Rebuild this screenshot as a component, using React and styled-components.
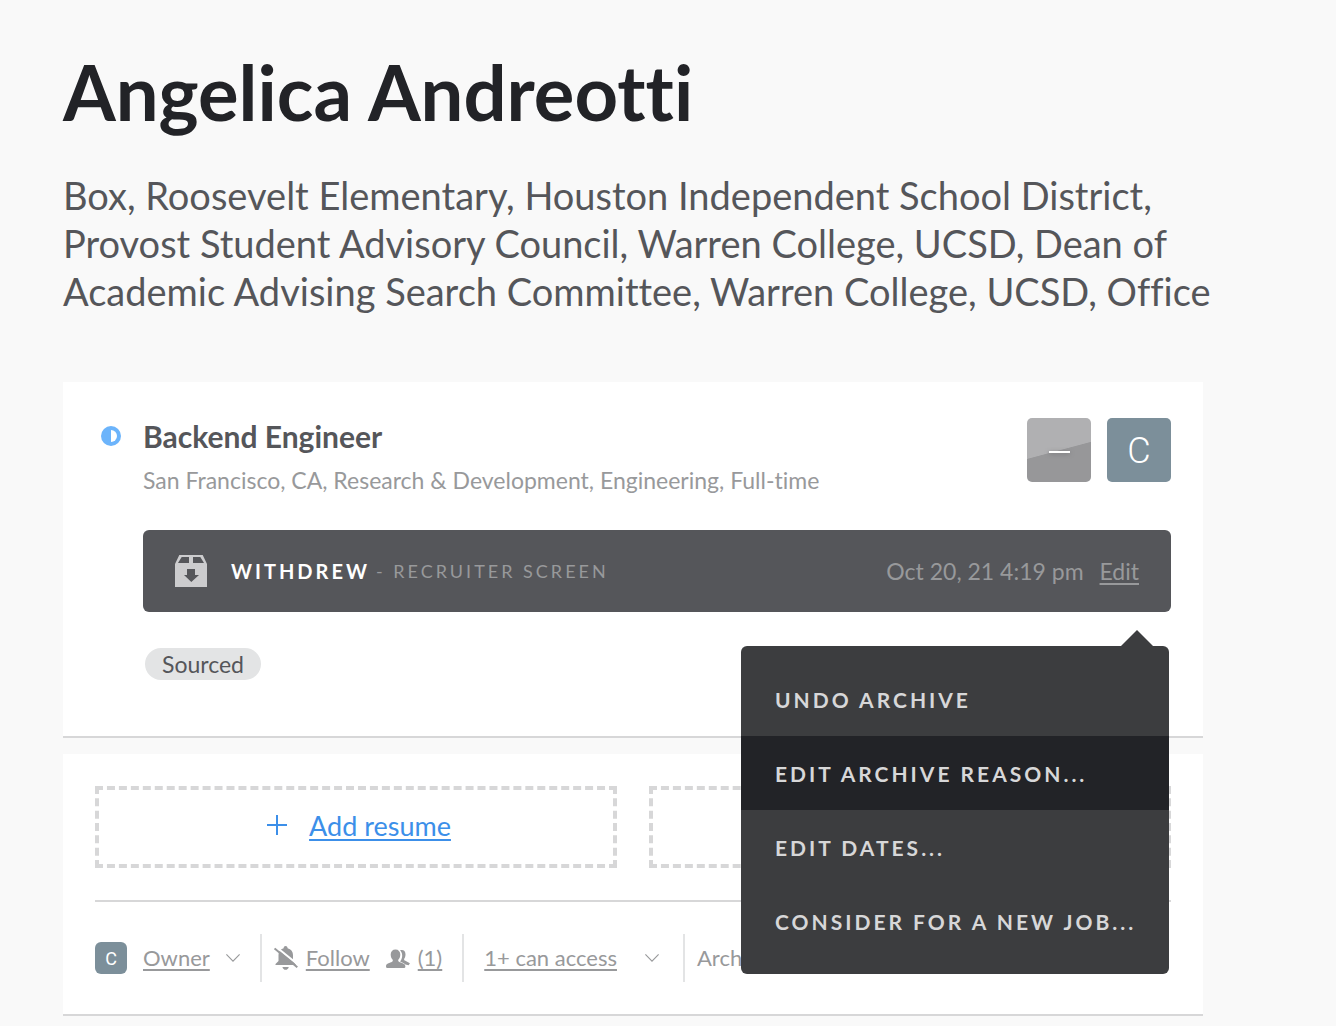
import React from "react";
import styled, { createGlobalStyle } from "styled-components";

const GlobalStyle = createGlobalStyle`
  *, *::before, *::after { box-sizing: border-box; }
  body {
    margin: 0;
    background: #f9f9f9;
    color: #55565a;
    font-family: Lato, "Open Sans", sans-serif;
    font-variant-ligatures: none;
  }
  h1, h2, p, ul { margin: 0; padding: 0; }
  button { font: inherit; color: inherit; border: 0; background: none; padding: 0; cursor: pointer; }
  a { color: inherit; text-decoration-thickness: 2px; text-underline-offset: 3px; }
  svg { display: block; flex: none; }
`;

const Page = styled.main`
  padding: 46px 133px 10px 63px;
`;

const Name = styled.h1`
  font-size: 76px;
  line-height: 92px;
  font-weight: 700;
  color: #222327;
`;

const Headline = styled.p`
  margin: 33px 0 67px;
  font-size: 38px;
  line-height: 48px;
`;

const Line = styled.span`
  display: block;
  white-space: nowrap;
`;

const Card = styled.section`
  background: #fff;
  border-bottom: 2px solid #d7d7d8;
  padding: 32px;
  & + & { margin-top: 16px; }
`;

const JobHeader = styled.header`
  display: flex;
  align-items: flex-start;
  gap: 16px;
  padding-top: 4px;
`;

const StageMark = styled.div`
  width: 32px;
  display: flex;
  justify-content: center;
  padding-top: 8px;
`;

const JobText = styled.div`
  flex: 1;
`;

const JobTitle = styled.h2`
  font-size: 30px;
  line-height: 36px;
  font-weight: 700;
`;

const JobMeta = styled.p`
  margin-top: 8px;
  font-size: 23px;
  line-height: 36px;
  color: #98999b;
`;

const Avatar = styled.div`
  width: ${(p) => p.$size}px;
  height: ${(p) => p.$size}px;
  border-radius: ${(p) => (p.$size > 40 ? 5 : 6)}px;
  display: grid;
  place-items: center;
  flex: none;
  color: #fff;
  padding-top: 2px;
  font-family: Roboto, sans-serif;
  font-size: ${(p) => (p.$size > 40 ? 36 : 18)}px;
  font-weight: ${(p) => (p.$size > 40 ? 300 : 400)};
  background: ${(p) =>
    p.$empty ? "linear-gradient(165deg, #b0b0b2 50%, #979799 51%)" : "#7c8f9a"};
`;

const Dash = styled.span`
  width: 21px;
  height: 2px;
  margin-top: 2px;
  background: #fff;
  box-shadow: 0 1px 4px #77777a;
`;

const Banner = styled.div`
  position: relative;
  display: flex;
  align-items: center;
  height: 82px;
  margin: 32px 0 36px 48px;
  padding: 0 32px;
  border-radius: 6px;
  background: #55565a;
  color: #98999b;
  font-size: 23px;
`;

const Reason = styled.strong`
  margin-left: 24px;
  font-size: 20px;
  font-weight: 700;
  letter-spacing: 3px;
  color: #fff;
`;

const Stage = styled.span`
  flex: 1;
  margin-left: 6px;
  font-size: 18px;
  letter-spacing: 3px;
`;

const EditButton = styled.button`
  margin-left: 16px;
  text-decoration: underline 2px;
  text-underline-offset: 3px;
`;

const Menu = styled.ul`
  position: absolute;
  top: calc(100% + 34px);
  right: 2px;
  z-index: 2;
  width: 428px;
  padding: 16px 0;
  border-radius: 6px;
  list-style: none;
  background: #3c3d3f;

  &::before {
    content: "";
    position: absolute;
    right: 16px;
    bottom: 100%;
    border: 16px solid transparent;
    border-top: 0;
    border-bottom-color: #3c3d3f;
  }
`;

const MenuItem = styled.button`
  display: block;
  width: 100%;
  height: 74px;
  padding: 0 34px;
  text-align: left;
  white-space: nowrap;
  font-size: 21px;
  font-weight: 700;
  letter-spacing: 3px;
  color: #d7d7d8;
  background: ${(p) => (p.$active ? "#222327" : "transparent")};
`;

const Tag = styled.span`
  display: block;
  width: max-content;
  margin: 0 0 24px 50px;
  padding: 0 17px;
  border-radius: 16px;
  background: #e3e4e5;
  font-size: 23px;
  line-height: 32px;
`;

const Uploads = styled.div`
  display: grid;
  grid-template-columns: 1fr 1fr;
  gap: 32px;
`;

const UploadBox = styled.div`
  display: flex;
  align-items: center;
  justify-content: center;
  gap: 22px;
  height: 82px;
  padding: 0 0 4px 6px;
  border: 4px dashed #d7d7d8;
  color: #3c8fe9;
  font-size: 27px;
`;

const Footer = styled.footer`
  display: flex;
  align-items: center;
  margin-top: 32px;
  padding-top: 32px;
  border-top: 2px solid #d7d7d8;
  color: #98999b;
  font-size: 22px;
  line-height: 28px;
`;

const FooterItem = styled.div`
  display: flex;
  align-items: center;
  gap: ${(p) => p.$gap}px;
  height: 48px;
  padding: 0 ${(p) => p.$right}px 0 ${(p) => p.$left}px;
  white-space: nowrap;
  & + & { border-left: 2px solid #e3e4e5; }
`;

const Followers = styled.span`
  display: flex;
  align-items: center;
  gap: 8px;
  margin-left: 8px;
`;

const StageIcon = () => (
  <svg width="20" height="20" viewBox="0 0 20 20" aria-hidden="true">
    <circle cx="10" cy="10" r="10" fill="#6cb4fb" />
    <path d="M10 4a6 6 0 0 1 0 12z" fill="#fff" />
  </svg>
);

const ArchiveIcon = () => (
  <svg width="32" height="32" viewBox="0 0 32 32" aria-hidden="true">
    <path
      fill="#ccccce"
      fillRule="evenodd"
      d="M4.3 0h23.4L32 9v23H0V9zM6.7 2 3 8h11V2zM18 2v6h11l-3.7-6zM12 14v6H9l7.3 7 7.7-7h-4v-6z"
    />
  </svg>
);

const PlusIcon = () => (
  <svg width="20" height="20" viewBox="0 0 20 20" aria-hidden="true">
    <path d="M10 0v20M0 10h20" stroke="currentColor" strokeWidth="2" />
  </svg>
);

const ChevronIcon = () => (
  <svg width="14" height="8" viewBox="0 0 14 8" aria-hidden="true">
    <path d="M.4.4 7 7.2 13.6.4" fill="none" stroke="currentColor" strokeWidth="1.1" />
  </svg>
);

const BellOffIcon = () => (
  <svg width="24" height="24" viewBox="0 0 24 24" aria-hidden="true">
    <path
      fill="currentColor"
      d="M9.6 2.2C9.7.9 10.5 0 11.6 0s1.9.9 2 2.2C17.2 3 19 5.6 19 9v5.5l3 4.5H1.5v-1L4.5 15V9c0-3.400 1.700-6 5.100-6.800zM8.400 21h6.400c-.5 1.900-1.700 2.800-3.200 2.800S8.900 22.900 8.400 21z"
    />
    <path d="M1 0 24.5 19" stroke="#fff" strokeWidth="2" />
    <path d="M.6 2.4 23.3 21.2" stroke="currentColor" strokeWidth="2" />
  </svg>
);

const PeopleIcon = () => (
  <svg width="24" height="19" viewBox="0 0 24 19" aria-hidden="true">
    <path
      fill="currentColor"
      d="M14 1.300c3-1 5.500.3 5.500 4 0 2.300-.6 3.500-1.300 4.400-.3 1 0 1.500 1.200 2.100l4.500 2.400-1.200 2-3.500-.6c-1.300-1.200-2.600-1.500-4-2.100-1.300-.6-1-1.400-.1-2.600 1.700-2.900 1.500-7.100-1.100-9.600z"
    />
    <path
      fill="currentColor"
      stroke="#fff"
      strokeWidth="1"
      paintOrder="stroke"
      d="M9.500.4c3 0 4.800 2 4.800 5.100 0 2.400-.9 4.200-2 5.300-.4 1.200.2 1.800 1.600 2.400 2.700 1.100 5.400 1.200 5.500 4.300q0 1.500-1.400 1.500H1.400Q0 19 0 17.500c0-3.100 2.700-3.200 5.200-4.300 1.400-.6 1.900-1.200 1.500-2.400-1.100-1.100-2-2.900-2-5.300C4.700 2.400 6.500.4 9.500.4z"
    />
  </svg>
);

const menuItems = [
  "UNDO ARCHIVE",
  "EDIT ARCHIVE REASON...",
  "EDIT DATES...",
  "CONSIDER FOR A NEW JOB...",
];

export default function App() {
  return (
    <Page>
      <GlobalStyle />
      <Name>Angelica Andreotti</Name>
      <Headline>
        <Line>Box, Roosevelt Elementary, Houston Independent School District, </Line>
        <Line>Provost Student Advisory Council, Warren College, UCSD, Dean of </Line>
        <Line>Academic Advising Search Committee, Warren College, UCSD, Office</Line>
      </Headline>

      <Card>
        <JobHeader>
          <StageMark><StageIcon /></StageMark>
          <JobText>
            <JobTitle>Backend Engineer</JobTitle>
            <JobMeta>San Francisco, CA, Research &amp; Development, Engineering, Full-time</JobMeta>
          </JobText>
          <Avatar $size={64} $empty><Dash /></Avatar>
          <Avatar $size={64}>C</Avatar>
        </JobHeader>
        <Banner>
          <ArchiveIcon />
          <Reason>WITHDREW</Reason>
          <Stage>- RECRUITER SCREEN</Stage>
          <time dateTime="2021-10-20T16:19">Oct 20, 21 4:19 pm</time>
          <EditButton type="button" aria-haspopup="menu" aria-expanded="true">Edit</EditButton>
          <Menu>
            {menuItems.map((label, i) => (
              <li key={label}>
                <MenuItem type="button" $active={i === 1}>{label}</MenuItem>
              </li>
            ))}
          </Menu>
        </Banner>
        <Tag>Sourced</Tag>
      </Card>

      <Card>
        <Uploads>
          <UploadBox>
            <PlusIcon />
            <a href="#resume">Add resume</a>
          </UploadBox>
          <UploadBox />
        </Uploads>
        <Footer>
          <FooterItem $left={0} $right={20} $gap={16}>
            <Avatar $size={32}>C</Avatar>
            <a href="#owner">Owner</a>
            <ChevronIcon />
          </FooterItem>
          <FooterItem $left={12} $right={20} $gap={8}>
            <BellOffIcon />
            <a href="#follow">Follow</a>
            <Followers>
              <PeopleIcon />
              <a href="#followers">(1)</a>
            </Followers>
          </FooterItem>
          <FooterItem $left={20} $right={24} $gap={28}>
            <a href="#access">1+ can access</a>
            <ChevronIcon />
          </FooterItem>
          <FooterItem $left={12} $right={0} $gap={0}>Archived</FooterItem>
        </Footer>
      </Card>
    </Page>
  );
}
